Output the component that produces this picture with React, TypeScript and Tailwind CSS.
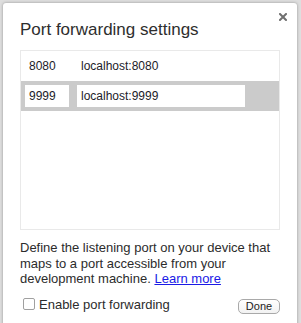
import { useState } from 'react';

const rules = [
  { port: '8080', address: 'localhost:8080' },
  { port: '9999', address: 'localhost:9999' },
];

export default function App() {
  const [selected, setSelected] = useState(1);
  const [enabled, setEnabled] = useState(false);

  return (
    <div className="w-[301px] h-[323px] overflow-hidden bg-[#dedede] pl-[3px] pt-[3px] pr-[4px] font-['Liberation_Sans',Arial,sans-serif] text-[#2c2c2c]">
      <div className="relative h-[340px] bg-white rounded-t-[3px] shadow-[0_0_3px_rgba(0,0,0,0.35)] px-[17px] pt-[17px]">
        {/* Close */}
        <button className="absolute top-[10px] right-[10px] w-[8px] h-[8px] text-[#707070]">
          <svg viewBox="0 0 8 8" width="8" height="8" className="block">
            <path d="M1 1L7 7M7 1L1 7" stroke="currentColor" strokeWidth="2" strokeLinecap="square" />
          </svg>
        </button>

        <h1 className="text-[17px] leading-[20px] font-normal text-[#2e2e2e]">Port forwarding settings</h1>

        {/* Rules list */}
        <div className="mt-[10px] h-[180px] border border-[#e9e9e9]">
          {rules.map((r, i) => {
            const active = i === selected;
            return (
              <div
                key={r.port}
                onClick={() => setSelected(i)}
                className={`h-[30px] flex items-center pl-[4px] gap-[8px] text-[12px] text-[#1c1c2a] ${active ? 'bg-[#cbcbcb]' : ''}`}
              >
                <div className={`w-[44px] h-[22px] leading-[22px] px-[4px] ${active ? 'bg-white' : ''}`}>{r.port}</div>
                <div className={`w-[168px] h-[22px] leading-[22px] px-[4px] ${active ? 'bg-white' : ''}`}>{r.address}</div>
              </div>
            );
          })}
        </div>

        <p className="mt-[10px] text-[13px] leading-[15.5px]">
          Define the listening port on your device that maps to a port accessible from your development machine.{' '}
          <a href="#" className="text-[#1a1ae6] underline">Learn more</a>
        </p>

        <div className="mt-[10px] flex justify-between items-start">
          <label className="flex items-center gap-[4px] pl-[3px] text-[13px] leading-[15px]">
            <span
              onClick={() => setEnabled(!enabled)}
              className="w-[12px] h-[12px] rounded-[2px] border border-[#a0a0a0] bg-white flex items-center justify-center"
            >
              {enabled && (
                <svg viewBox="0 0 10 10" width="9" height="9">
                  <path d="M2 5l2 2 4-5" stroke="#333" strokeWidth="1.5" fill="none" />
                </svg>
              )}
            </span>
            Enable port forwarding
          </label>
          <button className="mt-[2px] w-[42px] h-[15px] rounded-[5px] border border-[#a9a9a9] bg-gradient-to-b from-white to-[#f2f2f2] text-[11px] leading-[13px] text-[#222]">
            Done
          </button>
        </div>
      </div>
    </div>
  );
}
